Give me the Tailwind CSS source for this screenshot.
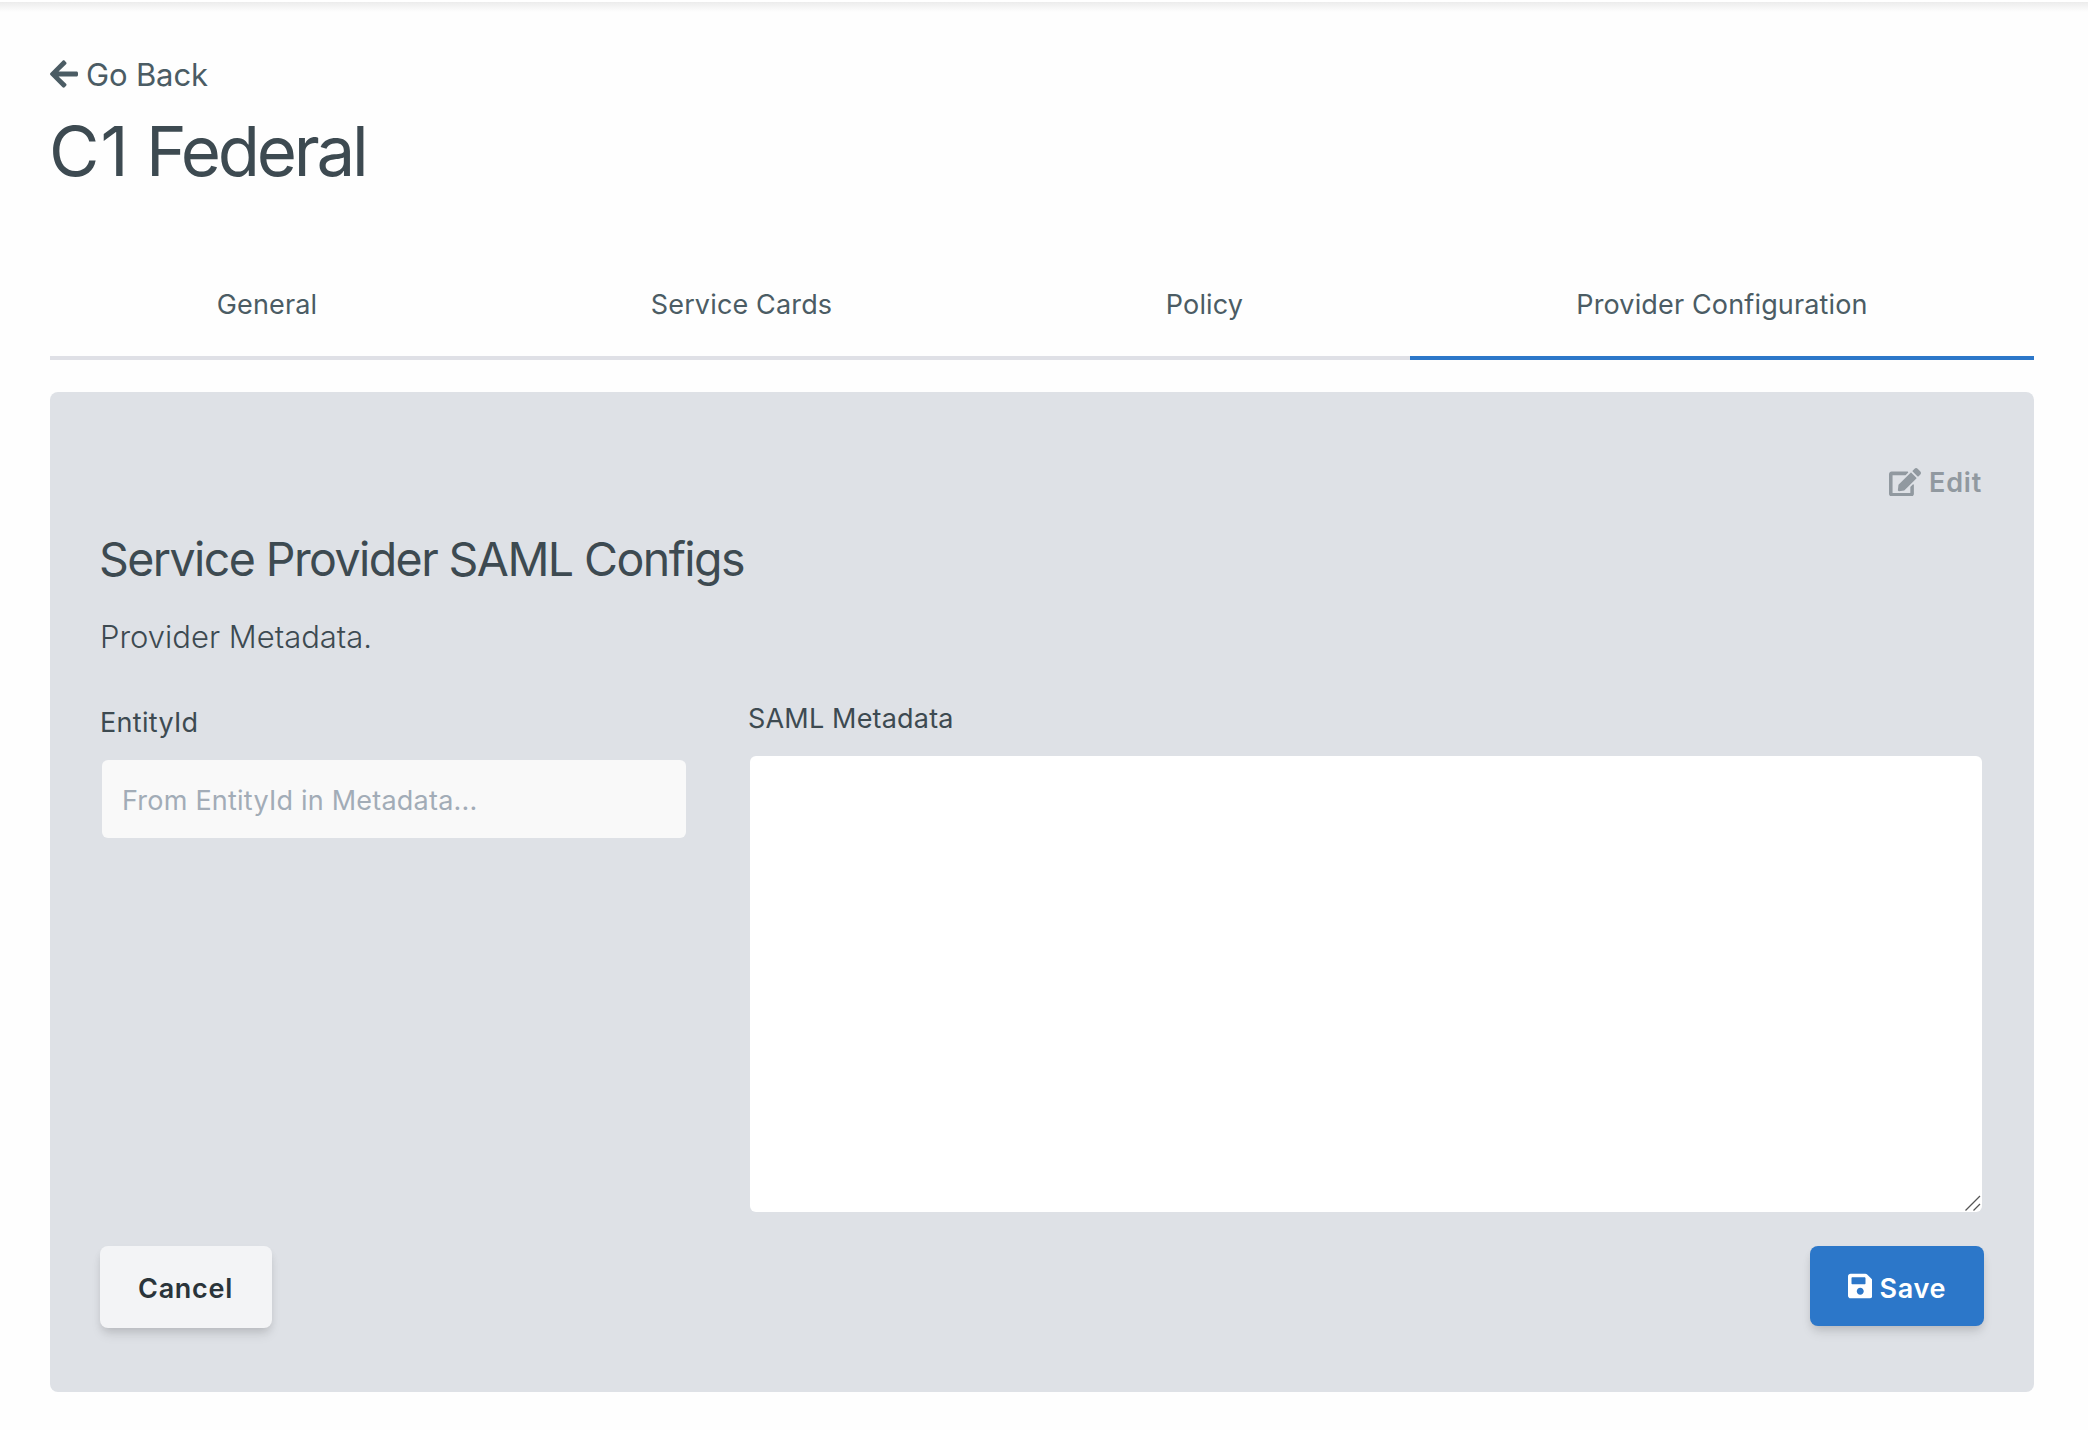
<!DOCTYPE html>
<html lang="en">
<head>
<meta charset="utf-8">
<title>C1 Federal</title>
<script src="https://cdn.jsdelivr.net/npm/@tailwindcss/browser@4"></script>
</head>
<body class="min-h-screen overflow-hidden bg-[#fefefe] font-['Inter',sans-serif] text-[#3d4a51]">
  <div class="h-0.5 bg-white"></div>
  <div class="h-2.5 bg-linear-to-b from-[#ececec] to-[#fefefe]"></div>

  <main class="pr-[54px] pl-[50px] pt-10">
    <a class="flex h-[46px] items-center text-[31px] leading-[46px] tracking-[-0.15px] text-[#4b5c64]">
      <svg class="mr-2 -mt-0.5 h-8 w-7" viewBox="0 0 448 512" fill="currentColor"><path d="M257.5 445.1l-22.2 22.2c-9.4 9.4-24.6 9.4-33.9 0L7 273c-9.4-9.4-9.4-24.6 0-33.9L201.4 44.7c9.4-9.4 24.6-9.4 33.9 0l22.2 22.2c9.5 9.5 9.3 25-.4 34.3L136.6 216H424c13.3 0 24 10.7 24 24v32c0 13.3-10.7 24-24 24H136.6l120.5 114.8c9.8 9.3 10 24.8.4 34.3z"/></svg>
      <span>Go Back</span>
    </a>
    <h1 class="-ml-px h-[105px] text-[69px] leading-[107px] tracking-[-3.2px]"><span class="tracking-[1.1px]">C1</span> Federal</h1>

    <nav class="mt-12 grid h-[109px] grid-cols-[434px_515px_411px_624px] text-center text-[27px] leading-[42px] tracking-[0.15px] text-[#4b5c64]">
      <a class="border-b-4 border-[#dfe0e6] pt-[33px]">General</a>
      <a class="border-b-4 border-[#dfe0e6] pt-[33px]">Service Cards</a>
      <a class="border-b-4 border-[#dfe0e6] pt-[33px]">Policy</a>
      <a class="border-b-4 border-[#2c77c9] pt-[33px]">Provider Configuration</a>
    </nav>

    <section class="mt-8 h-[1000px] rounded-lg bg-[#dee1e6] px-[50px] pt-[69px]">
      <div class="flex h-[42px] items-center justify-end pr-[2px] text-[27px] leading-[42px] font-semibold tracking-[0.8px] text-[#9199a0]">
        <svg class="mr-2 h-[28.5px] w-8" viewBox="0 0 576 512" fill="currentColor"><path d="M402.6 83.2l90.2 90.2c3.8 3.8 3.8 10 0 13.8L274.4 405.6l-92.8 10.3c-12.4 1.4-22.9-9.1-21.5-21.5l10.3-92.8L388.8 83.2c3.8-3.8 10-3.8 13.8 0zm162-22.9l-48.8-48.8c-15.2-15.2-39.9-15.2-55.2 0l-35.4 35.4c-3.8 3.8-3.8 10 0 13.8l90.2 90.2c3.8 3.8 10 3.8 13.8 0l35.4-35.4c15.2-15.3 15.2-40 0-55.2zM384 346.2V448H64V128h229.8c3.2 0 6.2-1.3 8.5-3.5l40-40c7.6-7.6 2.2-20.5-8.5-20.5H48C21.5 64 0 85.5 0 112v352c0 26.5 21.5 48 48 48h352c26.5 0 48-21.5 48-48V306.2c0-10.7-12.9-16-20.5-8.5l-40 40c-2.2 2.3-3.5 5.3-3.5 8.5z"/></svg>
        <span class="pt-0.5">Edit</span>
      </div>

      <h2 class="mt-5 -ml-px text-[46.5px] leading-[72px] tracking-[-1.57px]">Service Provider SAML Configs</h2>
      <p class="mt-[18px] text-[31px] leading-[48px] font-light">Provider Metadata.</p>

      <div class="mt-[37px] grid grid-cols-[586px_1234px] gap-x-[62px] text-[27px] leading-[42px]">
        <div class="pt-1">
          <label class="block tracking-[0.3px]">EntityId</label>
          <div class="mt-4 ml-0.5 flex h-[78px] w-[584px] items-center rounded-md bg-[#f9f9f9] pt-[3px] pl-5 tracking-[0.22px] text-[#a2acb7]">From EntityId in Metadata...</div>
        </div>
        <div>
          <label class="block tracking-[0.18px]">SAML Metadata</label>
          <div class="mt-4 ml-0.5 flex h-[456px] items-end justify-end rounded-md bg-white">
            <svg class="mr-[1px] mb-[1px] h-4 w-4" viewBox="0 0 16 16" fill="none" stroke="#555" stroke-width="1.3"><path d="M0.5 15.5L15 1M8.5 15.5L15 9"/></svg>
          </div>
        </div>
      </div>

      <div class="mt-[34px] flex items-start justify-between text-[27px] leading-[42px] font-semibold tracking-[0.7px]">
        <button class="h-[82px] w-[172px] rounded-lg bg-[#f3f4f6] pt-[3px] pr-px text-[#2a343a] shadow-[0_8px_12px_-2px_rgba(0,0,0,0.1),0_4px_8px_-2px_rgba(0,0,0,0.1)]">Cancel</button>
        <button class="flex h-20 w-[174px] items-center justify-center rounded-lg bg-[#2c77c9] text-white shadow-[0_8px_12px_-2px_rgba(0,0,0,0.1),0_4px_8px_-2px_rgba(0,0,0,0.1)]">
          <svg class="mr-[7px] h-7 w-[24.5px]" viewBox="0 0 448 512" fill="currentColor"><path d="M433.941 129.941l-83.882-83.882A48 48 0 0 0 316.118 32H48C21.49 32 0 53.49 0 80v352c0 26.51 21.49 48 48 48h352c26.51 0 48-21.49 48-48V163.882a48 48 0 0 0-14.059-33.941zM224 416c-35.346 0-64-28.654-64-64 0-35.346 28.654-64 64-64s64 28.654 64 64c0 35.346-28.654 64-64 64zm96-304.52V212c0 6.627-5.373 12-12 12H76c-6.627 0-12-5.373-12-12V108c0-6.627 5.373-12 12-12h228.52c3.183 0 6.235 1.264 8.485 3.515l3.48 3.48A11.996 11.996 0 0 1 320 111.48z"/></svg>
          <span class="pt-[5px]">Save</span>
        </button>
      </div>
    </section>
  </main>
</body>
</html>
